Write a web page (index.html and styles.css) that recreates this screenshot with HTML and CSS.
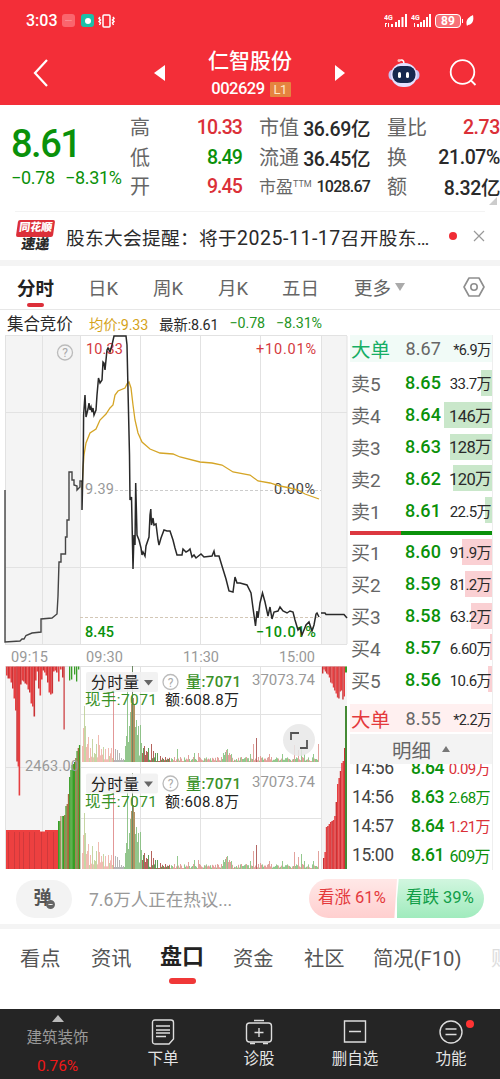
FILE: index.html
```html
<!DOCTYPE html>
<html lang="zh-CN">
<head>
  <meta charset="UTF-8" />
  <title>仁智股份 002629</title>
  <link rel="stylesheet" href="styles.css">
</head>
<body>

  <header class="header">
    <div class="status">
      <span class="clock">3:03</span>
      <span class="app-dot pink">·····</span>
      <span class="app-dot teal"><i></i></span>
      <svg class="vibrate" width="17" height="14" viewBox="0 0 17 14" fill="none" stroke="#fff" stroke-width="1.5"><rect x="5" y="1" width="7" height="12" rx="1"/><path d="M2 3l-1 1.5 1.500 1.500L1 7.500 2.500 9 1.500 11M15 3l1 1.500-1.500 1.500L16 7.500 14.500 9l1 2"/></svg>
      <div class="status-right">
        <svg width="24" height="15" viewBox="0 0 24 15" fill="#fff"><text x="0" y="6.500" font-size="7" font-weight="bold">4G</text><path d="M1 10h2v1H2v3H1zM4 10h1v4H4zM7 11h2v3H7zM11 9h2v5h-2zM14 7h2v7h-2zM17.500 4h2v10h-2zM21 1h2v13h-2z"/></svg>
        <svg width="21" height="15" viewBox="0 0 21 15" fill="#fff"><text x="0" y="6.500" font-size="7" font-weight="bold">4G</text><path d="M3 10h1v4H3zM6 11h2v3H6zM9 9h2v5H9zM12 7h2v7h-2zM15 4h2v10h-2zM18 1h2v13h-2z"/></svg>
        <span class="battery">89</span>
        <svg width="8" height="13" viewBox="0 0 8 13"><path d="M7 1C8 6 7 10 2 11L1 12C-1 6 3 3 7 1z" fill="#fff"/></svg>
      </div>
    </div>
    <div class="titlebar">
      <svg class="back" width="18" height="30" viewBox="0 0 18 30"><path d="M15 2L3 15l12 13" fill="none" stroke="#fff" stroke-width="2.200"/></svg>
      <svg class="prev" width="12" height="16" viewBox="0 0 12 16"><path d="M11 0v16L0 8z" fill="#fff"/></svg>
      <div class="title">
        <h1>仁智股份</h1>
        <div class="code"><span>002629</span><b>L1</b></div>
      </div>
      <svg class="next" width="12" height="16" viewBox="0 0 12 16"><path d="M1 0v16L11 8z" fill="#fff"/></svg>
      <svg class="robot" width="32" height="30" viewBox="0 0 32 30">
        <path d="M11 3c3-2 5-1 5 3" fill="none" stroke="#fff" stroke-width="1.500"/>
        <circle cx="11" cy="2.500" r="1.500" fill="#fbb"/>
        <ellipse cx="4" cy="17" rx="3.500" ry="5" fill="#c6c2f2"/><ellipse cx="28" cy="17" rx="3.500" ry="5" fill="#c6c2f2"/>
        <rect x="3" y="5" width="26" height="24" rx="12" fill="#e4e0ff"/>
        <rect x="4.500" y="8" width="23" height="17" rx="8" fill="#16284f"/>
        <rect x="10" y="14" width="3" height="6" rx="1.500" fill="#fff"/><rect x="18" y="14" width="3" height="6" rx="1.500" fill="#fff"/>
      </svg>
      <svg class="search" width="28" height="28" viewBox="0 0 28 28" fill="none" stroke="#fff" stroke-width="1.800"><circle cx="13.500" cy="13" r="11.800"/><path d="M22 21.500l4.500 4.500"/></svg>
    </div>
  </header>

  <section class="quote">
    <div class="price">
      <div class="last">8.61</div>
      <div class="change"><span>−0.78</span><span>−8.31%</span></div>
    </div>
    <dl class="stats">
      <div><dt>高</dt><dd class="up">10.33</dd></div>
      <div><dt>低</dt><dd class="down">8.49</dd></div>
      <div><dt>开</dt><dd class="up">9.45</dd></div>
    </dl>
    <dl class="stats mid">
      <div><dt>市值</dt><dd>36.69亿</dd></div>
      <div><dt>流通</dt><dd>36.45亿</dd></div>
      <div class="small"><dt>市盈<sup>TTM</sup></dt><dd>1028.67</dd></div>
    </dl>
    <dl class="stats last-col">
      <div><dt>量比</dt><dd class="up">2.73</dd></div>
      <div><dt>换</dt><dd>21.07%</dd></div>
      <div><dt>额</dt><dd>8.32亿</dd></div>
    </dl>
    <i class="corner"></i>
  </section>

  <section class="news">
    <div class="news-logo"><span>同花顺</span><em>速递</em></div>
    <p>股东大会提醒：<span>将于<b>2025-11-17</b>召开股东…</span></p>
    <i class="dot"></i>
    <svg width="12" height="12" viewBox="0 0 12 12"><path d="M1 1l10 10M11 1L1 11" stroke="#999" stroke-width="1.200"/></svg>
  </section>

  <nav class="periods">
    <a class="active">分时</a>
    <a>日K</a>
    <a>周K</a>
    <a>月K</a>
    <a>五日</a>
    <a class="more">更多<i></i></a>
    <svg width="22" height="20" viewBox="0 0 22 20" fill="none" stroke="#8e8e8e" stroke-width="1.600"><path d="M6 1h10l5 9-5 9H6L1 10z" stroke-linejoin="round"/><circle cx="11" cy="10" r="3.200"/></svg>
  </nav>

  <div class="info">
    <b>集合竞价</b>
    <span class="avg">均价:9.33</span>
    <span>最新:8.61</span>
    <span class="fall">−0.78</span>
    <span class="fall">−8.31%</span>
  </div>

  <main class="market">
    <svg class="chart" width="348" height="535" viewBox="0 335 348 535">
      <g fill="#f4f4f4">
        <rect x="5" y="336" width="75" height="308"/><rect x="321" y="336" width="26" height="308"/>
        <rect x="5" y="666" width="75" height="203"/><rect x="321" y="666" width="26" height="203"/>
      </g>
      <path class="grid" d="M5 335.500H347M5 412.500H347M5 567.500H347M5 644.500H347M5.500 336V644M42.500 336V644M80.500 336V644M140.500 336V644M200.500 336V644M260.500 336V644M321.500 336V644M347 336V644M5 666.500H347M80 714.500H321M5 767.500H347M80 818.500H321M5.500 666V869M42.500 666V869M80.500 666V869M140.500 666V869M200.500 666V869M260.500 666V869M321.500 666V869"/>
      <path d="M115 490.500H321" stroke="#ccc" stroke-dasharray="3 2"/>
      <path d="M80 617.500H321" stroke="#d3c7b6" stroke-dasharray="3 2"/>

      <g id="volume"></g>

      <g font-size="14.500">
        <text x="86" y="354" textLength="37" fill="#d43a40">10.33</text>
        <text x="256" y="354" textLength="60" fill="#d43a40">+10.01%</text>
        <text x="85" y="493.500" textLength="29" fill="#999">9.39</text>
        <text x="274" y="493.500" textLength="41" fill="#444">0.00%</text>
        <text x="85" y="636.500" textLength="29" fill="#0a910a" font-weight="500">8.45</text>
        <text x="256" y="636.500" textLength="60" fill="#0a910a" font-weight="500">−10.01%</text>
        <g fill="#999">
          <text x="11" y="661.500" textLength="37">09:15</text>
          <text x="86" y="661.500" textLength="37">09:30</text>
          <text x="183" y="661.500" textLength="36">11:30</text>
          <text x="279" y="661.500" textLength="36">15:00</text>
          <text x="25" y="771" textLength="54">2463.00</text>
        </g>
      </g>
      <circle cx="65" cy="352.500" r="7.500" fill="none" stroke="#bbb" stroke-width="1.300"/>
      <text x="65" y="356.500" text-anchor="middle" font-size="12" fill="#aaa">?</text>

      <polyline class="avg-line" points="82,490 83,470 84,455 86,443 90,433 96,429 100,420 106,414 110,408 113,405 115,395 118,391 125,388 127,384 129,382 131,388 133,405 135,420 138,433 142,442 150,449 160,453 173,454 180,457 200,462 212,463 222,465 233,472 250,475 258,481 270,483 280,486 290,488 298,490 305,494 319,499"/>
      <polyline class="auction-line" points="5,490 5,642 20,641 22,639 24,639 26,635.500 32,633 41,632 41,619 52,618 57,614 58,596 59,562 61,562 61,554 65.500,554 65.500,537 67,537 67,520 69,520 69,472 72,472 72,480 74,480 74,485 77,486 77,490 80,487 80,481 82,481"/>
      <polyline class="price-line" points="82,481 82,510 83.300,455 83.600,415 85,395 86,417 88,409 89,403 90,410 91,407 92,412 93,408 94,415 96,410 97,395 98.500,378 100,383 102,380 103,362 104,363 105,370 107,350 108,348 110,352 112,345 114,336 126,336 127,345 128,390 129.500,455 130,500 131.500,497 132,520 133,569 134,535 135,545 135.700,483 137,535 139,540 141,548 142,555 143,552 145,556 146,546 149,537 150,515 150.800,509 151.500,525 153,518 154,525 156,524 158,540 159,545 161,538 164,530 167,531 170,531 173,540 175,548 177,555 182,555 183,549 186,552 188,551 190,549 192,557 194,555 196,558 201,554 204,557 212,556 214,551 215,556 219,556 222,566 226,579 229,591 233,592 235,577 237,583 240,583 247,585 251,593 253,608 255.500,626 257,611 258,618 260,603 262.500,593 265,602 268,616 270,607 272,619 274,612 278,611 280,607 283,611 287,613 290,611 293,612 295,620 298,630 300,628 302,635 306,625 309,622 312,631 314,625 316,614 317,613 319,617"/>
      <polyline class="price-line" points="321,613 325,613 326,614.500 344,614.500 347,618"/>

      <g id="panel">
        <rect x="86" y="672" width="72" height="20" rx="2" fill="#f1f1f1" opacity=".9"/>
        <text x="91" y="688" font-size="15.500" textLength="48" fill="#222">分时量</text>
        <path d="M144 680h9l-4.500 5.500z" fill="#666"/>
        <circle cx="170.500" cy="682" r="7.500" fill="none" stroke="#bbb" stroke-width="1.300"/>
        <text x="170.500" y="686.500" text-anchor="middle" font-size="12" fill="#aaa">?</text>
        <text x="186" y="687" font-size="15" textLength="55" fill="#3a9128" font-weight="500">量:7071</text>
        <text x="252" y="685" font-size="15" textLength="63" fill="#999">37073.74</text>
        <text x="85" y="705" font-size="15.500" textLength="72" fill="#3a9128">现手:7071</text>
        <text x="165" y="705" font-size="15" textLength="74" fill="#222">额:608.8万</text>
      </g>
      <use href="#panel" y="101.500"/>
      <circle cx="299" cy="740" r="16" fill="#e8e8e8" opacity=".85"/>
      <path d="M291 740v-7h8M307 740v8h-7" fill="none" stroke="#555" stroke-width="1.800"/>
    </svg>

    <aside class="book">
      <div class="big sell"><span>大单</span><b>8.67</b><em>*6.9万</em></div>
      <div class="levels asks" id="asks"></div>
      <div class="ratio"><i></i></div>
      <div class="levels bids" id="bids"></div>
      <div class="big buy"><span>大单</span><b>8.55</b><em>*2.2万</em></div>
      <div class="detail-head">明细<i></i></div>
      <div class="ticks">
        <div><span>14:56</span><b>8.64</b><em class="up">0.09万</em></div>
        <div><span>14:56</span><b>8.63</b><em class="down">2.68万</em></div>
        <div><span>14:57</span><b>8.64</b><em class="up">1.21万</em></div>
        <div><span>15:00</span><b>8.61</b><em class="down wide">609万</em></div>
      </div>
    </aside>
  </main>

  <section class="talk">
    <div class="danmu">弹<i></i></div>
    <p>7.6万人正在热议...</p>
    <div class="vote"><span class="bull">看涨 61%</span><span class="bear">看跌 39%</span></div>
  </section>

  <nav class="sections">
    <a>看点</a><a>资讯</a><a class="active">盘口</a><a>资金</a><a>社区</a><a>简况(F10)</a><a class="cut">财务</a>
  </nav>

  <footer class="toolbar">
    <div class="sector"><i></i><span>建筑装饰</span><b>0.76%</b></div>
    <div class="tool">
      <svg width="24" height="26" viewBox="0 0 24 26"><path d="M4 1h16q2.500 0 2.500 2.500V20l-4.500 5H4q-2.500 0-2.500-2.500v-19Q1.500 1 4 1zM5 7h14M5 11h14M5 14h14M5 17.500h10"/></svg>
      <span>下单</span>
    </div>
    <div class="tool">
      <svg width="28" height="26" viewBox="0 0 28 26"><rect x="1.500" y="4" width="25" height="19" rx="3"/><path d="M9 1.500h10M14 9v9M9.500 13.500h9M5 24.500h5M18 24.500h5"/></svg>
      <span>诊股</span>
    </div>
    <div class="tool">
      <svg width="24" height="26" viewBox="0 0 24 26"><path d="M1.500 2h21v21h-21zM6 12.500h12"/></svg>
      <span>删自选</span>
    </div>
    <div class="tool">
      <svg width="26" height="26" viewBox="0 0 26 26"><circle cx="13" cy="13" r="11"/><path d="M7.500 10h11M7.500 15.500h11"/></svg>
      <span>功能</span>
      <i class="badge"></i>
    </div>
  </footer>

  <script src="script.js"></script>
</body>
</html>
```
FILE: styles.css
```css
* {
  box-sizing: border-box;
}

body {
  margin: 0;
  width: 500px;
  height: 1079px;
  overflow: hidden;
  background: #fff;
  color: #2a2a2a;
  font-family: Roboto, "Noto Sans CJK SC", sans-serif;
}

h1, p, dl, dd {
  margin: 0;
}

i, em {
  font-style: normal;
}

.up { color: #db3038; }
.down { color: #0a910a; }

/* header */
.header {
  height: 105px;
  background: #f32e38;
  color: #fff;
}

.status {
  height: 40px;
  padding: 1px 26px 0;
  display: flex;
  align-items: center;
}

.clock {
  width: 36px;
  font-size: 16px;
  font-weight: 500;
}

.app-dot {
  width: 13px;
  height: 13px;
  border-radius: 3px;
  margin-right: 6px;
  font-size: 5px;
  line-height: 12px;
  text-align: center;
}

.pink { background: #fa656d; }

.teal {
  background: #1bc0a8;
  display: flex;
  align-items: center;
  justify-content: center;
  margin-right: 4px;
}

.teal i {
  width: 6px;
  height: 6px;
  border-radius: 50%;
  background: #fff;
}

.status-right {
  display: flex;
  align-items: center;
  gap: 3px;
  margin-left: auto;
}

.battery {
  position: relative;
  width: 26px;
  height: 14px;
  border: 1px solid #fff;
  border-radius: 4px;
  background: #f77078;
  font-size: 12px;
  font-weight: 700;
  line-height: 13px;
  text-align: center;
  margin-right: 2px;
}

.battery::after {
  content: "";
  position: absolute;
  right: -3px;
  top: 4px;
  width: 1px;
  height: 4px;
  background: #fff;
}

.titlebar {
  display: flex;
  align-items: center;
  height: 65px;
  padding-left: 32px;
}

.back { margin-right: 104px; }

.title {
  width: 168px;
  text-align: center;
}

.title h1 {
  font-size: 21px;
  font-weight: 500;
  line-height: 26px;
  margin-top: 4px;
}

.code {
  display: flex;
  align-items: center;
  justify-content: center;
  gap: 5px;
  font-size: 16.5px;
  font-weight: 500;
  letter-spacing: -.5px;
  line-height: 24px;
  margin: 3px 0 0 2px;
}

.code b {
  width: 21px;
  height: 15px;
  background: #e5843f;
  border-radius: 1px;
  color: #ffe8c8;
  font-size: 13px;
  font-weight: 400;
  line-height: 15px;
}

.robot { margin-left: 42px; }
.search { margin-left: 29px; }

/* quote */
.quote {
  position: relative;
  display: flex;
  height: 106px;
  padding-top: 8px;
}

.price {
  width: 130px;
  padding-left: 11px;
  color: #0a910a;
}

.last {
  font-size: 38px;
  font-weight: 500;
  letter-spacing: -1.5px;
  line-height: 44px;
  margin-top: 9px;
}

.change {
  display: flex;
  gap: 10px;
  font-size: 18px;
  letter-spacing: -.3px;
  line-height: 22px;
  margin-top: 1px;
  white-space: nowrap;
}

.stats { width: 112px; }
.stats.mid { width: 111px; margin-left: 17px; }
.stats.last-col { width: 113px; margin-left: 17px; }

.stats div {
  display: flex;
  justify-content: space-between;
  align-items: center;
  height: 29.5px;
  white-space: nowrap;
}

.stats dt {
  color: #666;
  font-size: 20px;
  margin-top: -2px;
}

.stats dd {
  font-size: 19.5px;
  font-weight: 500;
  letter-spacing: -.9px;
}

.stats.mid dd, .stats.last-col dd {
  letter-spacing: -.4px;
}

.stats .small dt { font-size: 17px; }
.stats.mid .small dd { font-size: 16px; letter-spacing: -.8px; }

.stats sup {
  font-size: 9px;
  line-height: 0;
  vertical-align: 6px;
}

.corner {
  position: absolute;
  right: 3px;
  bottom: 6px;
  border: 4px solid transparent;
  border-right-color: #ccc;
  border-bottom-color: #ccc;
}

/* news */
.news {
  display: flex;
  align-items: center;
  height: 49px;
  margin: 0 15px;
  border-top: 1px solid #f3f3f3;
}

.news-logo {
  width: 51px;
  font-size: 14px;
  font-weight: 900;
  line-height: 15px;
  text-align: center;
  padding-right: 10px;
}

.news-logo span {
  display: block;
  width: 37px;
  height: 17px;
  margin-left: 2px;
  background: #dc2f39;
  color: #fff;
  border-radius: 2px;
  font-size: 11px;
  line-height: 16px;
  transform: skewX(-8deg);
}

.news-logo em {
  display: block;
  transform: skewX(-8deg);
}

.news p {
  font-size: 18.7px;
  letter-spacing: .3px;
  white-space: nowrap;
}

.news p b {
  font-size: 19.5px;
  font-weight: 400;
  letter-spacing: .55px;
}

.dot {
  width: 8px;
  height: 8px;
  border-radius: 50%;
  background: #f02c35;
  margin-left: auto;
  margin-right: 16px;
}

/* period tabs */
.periods {
  display: flex;
  align-items: center;
  height: 50px;
  padding: 0 15px 1px 17px;
  border-top: 6px solid #f4f4f4;
  border-bottom: 1px solid #e7e7e7;
  color: #666;
  font-size: 18.5px;
}

.periods a {
  position: relative;
  width: 65px;
}

.periods a:first-child { width: 71px; }
.periods a:nth-child(4) { width: 64px; }
.periods a:nth-child(5) { width: 72px; }
.periods .more { width: 92px; }
.periods svg { margin-left: auto; }

.periods .active {
  color: #222;
  font-weight: 700;
}

.periods .active::after {
  content: "";
  position: absolute;
  left: 10px;
  bottom: -7px;
  width: 17px;
  height: 4px;
  border-radius: 2px;
  background: #dc2f39;
}

.more {
  display: flex;
  align-items: center;
  gap: 4px;
}

.more i {
  border: 5px solid transparent;
  border-top: 8px solid #aaa;
  border-bottom: 0;
}

.info {
  display: flex;
  align-items: center;
  height: 25px;
  padding: 1px 0 0 7px;
  font-size: 14.3px;
  letter-spacing: -.1px;
  white-space: nowrap;
}

.info b {
  width: 82px;
  font-size: 16.5px;
  font-weight: 400;
}

.info span { margin-right: 11px; }
.info .avg { color: #d5a31a; }
.info .fall { color: #259525; }

/* chart and order book */
.market {
  display: flex;
  height: 535px;
}

.chart {
  flex: none;
  margin-right: 2px;
}

.grid { stroke: #e2e2e2; fill: none; }
.avg-line { stroke: #d5a526; stroke-width: 1.3; fill: none; }
.price-line { stroke: #292929; stroke-width: 1.5; fill: none; }
.auction-line { stroke: #444; stroke-width: 1.4; fill: none; }

.book {
  width: 143px;
  border-right: 1px solid #eee;
}

.big, .level, .ticks div {
  display: flex;
  align-items: center;
  justify-content: flex-end;
  position: relative;
  white-space: nowrap;
}

.big span, .level span, .ticks span {
  margin-right: auto;
}

.big {
  height: 27px;
  padding: 0 1px;
  font-size: 19.5px;
}

.big b, .level b {
  font-size: 18px;
  letter-spacing: .1px;
}

.big b {
  color: #666;
  font-weight: 400;
}

.big em, .level em {
  width: 50px;
  font-size: 15px;
  letter-spacing: -.6px;
  text-align: right;
}

.big em { font-size: 14.5px; }

.sell { background: #f1fbf7; }
.sell span { color: #16ae65; }
.buy { background: #fff0f0; height: 28px; }
.buy span { color: #e4393c; }

.levels {
  height: 169px;
  padding-top: 5px;
}

.level {
  height: 31.8px;
  padding: 0 1px;
}

.level span {
  color: #666;
  font-size: 19px;
}

.level b {
  color: #0a910a;
  font-weight: 500;
}

.level em, .level b, .level span { z-index: 1; }
.level em.wide { font-size: 16.5px; }

.level i {
  position: absolute;
  right: 0;
  top: 3px;
  height: 26px;
  background: #c9e7ca;
}

.bids .level i { background: #fad0d3; }

.ratio {
  height: 4px;
  background: #0a910a;
}

.ratio i {
  display: block;
  width: 36%;
  height: 4px;
  background: #dc3840;
}

.bids {
  height: 169px;
  padding-top: 1px;
}

.detail-head {
  display: flex;
  align-items: center;
  justify-content: center;
  gap: 11px;
  height: 30px;
  margin-top: 2px;
  background: #f3f3f3;
  color: #666;
  font-size: 19.5px;
}

.detail-head i {
  border: 4px solid transparent;
  border-bottom: 6px solid #777;
  border-top: 0;
}

.ticks {
  display: flex;
  flex-direction: column;
  justify-content: flex-end;
  height: 105px;
  overflow: hidden;
}

.ticks div {
  flex: none;
  height: 29px;
  padding: 0 2px;
}

.ticks span {
  color: #444;
  font-size: 17.5px;
  letter-spacing: -.4px;
}

.ticks b {
  color: #0a910a;
  font-size: 17.5px;
  font-weight: 500;
  letter-spacing: -.4px;
}

.ticks em {
  width: 46px;
  font-size: 15px;
  letter-spacing: -.6px;
  text-align: right;
}

.ticks em.wide { font-size: 16px; }

/* discussion */
.talk {
  display: flex;
  align-items: center;
  height: 59px;
  padding: 3px 16px 0;
  border-bottom: 5px solid #f4f4f4;
}

.danmu {
  position: relative;
  width: 56px;
  height: 38px;
  border-radius: 19px;
  background: #f3f3f3;
  color: #555;
  font-size: 18px;
  font-weight: 700;
  line-height: 35px;
  padding-right: 3px;
  text-align: center;
}

.danmu i {
  position: absolute;
  right: 17px;
  bottom: 9px;
  width: 9px;
  height: 9px;
  border: solid #666;
  border-width: 4px 2px;
  border-radius: 50%;
  background: #fff;
}

.talk p {
  margin-left: 17px;
  color: #999;
  font-size: 17.5px;
}

.vote {
  display: flex;
  width: 175px;
  height: 39px;
  margin-left: auto;
  border-radius: 20px;
  overflow: hidden;
  font-size: 16.5px;
  line-height: 38px;
}

.bull {
  width: 88px;
  padding-left: 9px;
  background: linear-gradient(#ffe8e7, #ffcfcf);
  color: #e4393c;
  clip-path: polygon(0 0, 100% 0, 97% 100%, 0 100%);
}

.bear {
  flex: 1;
  padding-left: 9px;
  background: linear-gradient(#d1f6df, #a0ebbd);
  color: #109e48;
  clip-path: polygon(2% 0, 100% 0, 100% 100%, -2% 100%);
}

/* section tabs */
.sections {
  display: flex;
  height: 80px;
  padding: 13px 0 0 20px;
  overflow: hidden;
  color: #555;
  font-size: 20.3px;
  white-space: nowrap;
}

.sections a {
  position: relative;
  flex: none;
  width: 71px;
}

.sections a:nth-child(2) { width: 69px; }
.sections a:nth-child(3) { width: 73px; }
.sections a:nth-child(5) { width: 69px; }
.sections a:nth-child(6) { width: 118px; }
.sections .cut { color: #ddd; }

.sections .active {
  color: #222;
  font-size: 22px;
  font-weight: 700;
  line-height: 30px;
}

.sections .active::after {
  content: "";
  position: absolute;
  left: 9px;
  top: 36px;
  width: 27px;
  height: 6px;
  border-radius: 3px;
  background: #f03838;
}

/* bottom toolbar */
.toolbar {
  display: flex;
  height: 70px;
  background: #252525;
  color: #e4e4e4;
}

.sector {
  display: flex;
  flex-direction: column;
  align-items: center;
  width: 115px;
  padding-top: 6px;
  color: #999;
  font-size: 15.5px;
  line-height: 20px;
}

.sector i {
  border: 6px solid transparent;
  border-bottom: 7px solid #bbb;
  border-top: 0;
  margin-bottom: 6px;
}

.sector b {
  color: #f01818;
  font-weight: 400;
  letter-spacing: -.1px;
  margin-top: 8px;
}

.tool {
  position: relative;
  display: flex;
  flex-direction: column;
  align-items: center;
  width: 96px;
  padding-top: 10px;
  font-size: 15.5px;
  line-height: 22px;
}

.tool svg {
  fill: none;
  stroke: #ddd;
  stroke-width: 1.4;
  margin-bottom: 3px;
}

.badge {
  position: absolute;
  left: 63px;
  top: 11px;
  width: 8px;
  height: 8px;
  border-radius: 50%;
  background: #f33;
}
```
FILE: script.js
```js
// order book: label, price, volume, depth bar width
const asks = [
  ["卖5", "8.65", "33.7万", 11],
  ["卖4", "8.64", "146万", 48],
  ["卖3", "8.63", "128万", 42],
  ["卖2", "8.62", "120万", 39],
  ["卖1", "8.61", "22.5万", 7]
];
const bids = [
  ["买1", "8.60", "91.9万", 30],
  ["买2", "8.59", "81.2万", 27],
  ["买3", "8.58", "63.2万", 21],
  ["买4", "8.57", "6.60万", 2],
  ["买5", "8.56", "10.6万", 4]
];

function levels(id, rows) {
  document.getElementById(id).innerHTML = rows.map(r =>
    `<div class="level"><i style="width:${r[3]}px"></i><span>${r[0]}</span><b>${r[1]}</b><em class="${r[2].length < 5 ? "wide" : ""}">${r[2]}</em></div>`
  ).join("");
}
levels("asks", asks);
levels("bids", bids);

const RED = "#e53e40", DARK_RED = "#c93336", GREEN = "#389e26", BROWN = "#a4683c";
let bars = "";

function bar(x, y, w, h, color) {
  bars += `<rect x="${x}" y="${y}" width="${w}" height="${h}" fill="${color}"/>`;
}

// opening auction: unmatched volume hangs from the top, [x, height]
const hanging = [[6, 9], [7.5, 12], [9, 12], [10.500, 16], [12, 22], [13.5, 32], [15, 44], [16.3, 95], [17.6, 100], [18.6, 129], [20, 18],
  [21.5, 14], [23, 15], [24.5, 17], [26, 18], [27.5, 23], [29, 26], [30.5, 37], [32, 40], [33.5, 50], [35, 14], [36.5, 5], [38, 22],
  [39.5, 29], [41, 13], [42.5, 4], [44, 6], [45.5, 9], [47, 16], [48.5, 26], [50, 28], [51.5, 27], [53, 5], [54.5, 4], [56, 6], [58, 15], [60, 3], [62, 11]];
hanging.forEach((b, i) => bar(b[0], 666.5, 1.6, b[1], i % 3 == 1 ? DARK_RED : RED));
bar(63.5, 666.5, 1.2, 63, DARK_RED);
[[69, 14], [71, 13], [74, 8], [76, 15], [78, 3]].forEach(b => bar(b[0], 666.5, 1.3, b[1], GREEN));

// opening auction: matched volume
bar(6, 830, 34, 39, "#ed4040");
bar(40, 831.5, 5, 37.5, "#ed4040");
bar(45, 830, 13, 39, "#ed4040");
[8, 14, 19, 23, 29, 34, 41, 47, 53].forEach(x => bar(x, 832, 1, 37, "#cf393c"));
const matched = [821, 821, 816, 816, 816, 815, 806, 804, 794, 777, 770, 765, 764, 762, 758, 751, 748, 745];
matched.forEach((y, i) => bar(58 + i * 1.23, y, 1.3, 869 - y, [2, 5, 7, 8, 14, 16].includes(i) ? BROWN : GREEN));
bar(61.5, 816, .7, 53, "#fff");

// closing auction
[7, 3, 5, 7, 8, 11, 16, 17, 21, 24, 27, 31, 32, 25, 24, 33, 30].forEach((h, i) => bar(322 + i * 1.35, 666.5, 1.4, h, i % 3 ? RED : DARK_RED));
bar(345, 666.5, 2, 6, GREEN);
[858, 852, 827, 826, 824, 822, 821, 820, 816, 802, 784, 778, 771, 763, 761, 748].forEach((y, i) => bar(323 + i * 1.4, y, 1.5, 869 - y, i % 3 ? RED : DARK_RED));
bar(345, 706, 2, 163, "#458b36");

// per-minute volume, drawn once for each panel
const peaks = {
  82: 16, 83: 34, 84: 56, 85: 36, 86: 15, 87: 18, 88: 25, 90: 14, 92: 23, 94: 9, 96: 18, 98: 27, 99: 17, 101: 13, 103: 15, 105: 13, 108: 14, 111: 14,
  113: 80, 115: 13, 117: 12, 119: 9, 121: 4, 123: 3, 125: 16, 126: 26, 127: 86, 128: 20, 129: 36, 130: 50, 131: 58, 132: 96, 133: 64, 134: 57, 135: 35, 136: 42, 137: 27, 138: 36,
  140: 37, 141: 19, 143: 14, 144: 16, 146: 11, 148: 14, 151: 18, 153: 11, 155: 9, 157: 9, 160: 6, 177: 13, 188: 7, 194: 9, 198: 9, 223: 9, 225: 10, 226: 12, 227: 13, 229: 9, 231: 8,
  250: 8, 253: 18, 256: 24, 260: 6, 269: 8, 282: 8, 294: 17, 298: 12, 301: 15, 304: 8, 313: 8, 318: 18
};
function minutes(base) {
  for (let x = 82; x < 319; x++) {
    const noise = Math.floor(Math.abs(Math.sin(x * 12.9898) * 43758.5453) % 11);
    const h = peaks[x] || (x < 114 ? 2 + noise / 1.5 : x < 125 ? 2 : x < 148 ? 6 + noise / 2 : x > 223 && x < 232 ? 7 : 1 + noise / 2.5);
    let color = noise % 2 ? "#82bf7a" : "#dd928c";
    if (x < 114) color = noise % 3 ? "#efb0a5" : "#bccf95";
    else if (x < 124) color = "#aaa";
    else if (x > 130 && x < 135) color = "#b39262";
    else if (x < 142) color = "#80bd7a";
    else if (x < 170) color = noise % 2 ? "#438b3b" : "#a84840";
    if (x == 113) color = "#dd8585";
    if (x == 132) color = "#6d8963";
    if (x == 256) color = "#a64d4a";
    bar(x, base - h, x > 130 && x < 135 ? 1 : .85, h, color);
  }
}
minutes(762);
minutes(869);
document.getElementById("volume").innerHTML = bars;
```
